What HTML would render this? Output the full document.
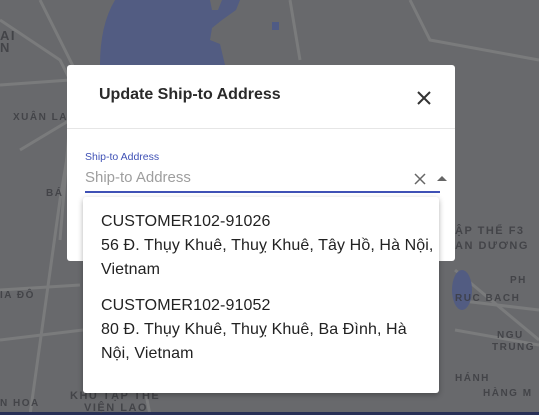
<!DOCTYPE html>
<html><head><meta charset="utf-8"><style>
*{margin:0;padding:0;box-sizing:border-box}
body{width:539px;height:415px;overflow:hidden;position:relative;background:#68696c;font-family:"Liberation Sans","DejaVu Sans",sans-serif}
.map{position:absolute;left:0;top:0}
.lbl{position:absolute;color:#3a3b40;font-size:10px;letter-spacing:1.5px;font-weight:bold;opacity:.8}
.dlg{position:absolute;left:67px;top:65px;width:388px;height:196px;background:#fff;border-radius:3px}
.title{position:absolute;left:32px;top:21px;font-size:16px;font-weight:bold;color:#2a2a2a}
.close{position:absolute;left:349px;top:25px}
.hr{position:absolute;left:0;top:63px;width:388px;height:1px;background:#e6e6e6}
.flabel{position:absolute;left:85px;top:151px;font-size:10.5px;color:#3f51b5}
.ph{position:absolute;left:85px;top:169px;font-size:15px;color:#9e9e9e}
.ul{position:absolute;left:85px;top:191px;width:355px;height:2px;background:#3f51b5}
.panel{position:absolute;left:83px;top:197px;width:356px;height:196px;background:#fff;border-radius:3px;box-shadow:0 2px 6px rgba(0,0,0,.3)}
.opt{position:absolute;left:18px;font-size:16px;line-height:24px;color:#222;letter-spacing:0.1px}
</style></head><body>
<svg class="map" width="539" height="415">
<g stroke="#7a7b7c" stroke-width="3" fill="none">
<path d="M0 20 L60 60 L100 140 L120 260 L150 415"/>
<path d="M40 0 L80 80 L60 200 L30 415"/>
<path d="M0 85 L70 80"/>
<path d="M0 290 L80 285"/>
<path d="M290 0 L300 60"/>
<path d="M410 0 L430 40 L539 60"/>
<path d="M455 270 L539 340"/>
<path d="M455 330 L539 345"/>
<path d="M455 300 L539 310"/>
<path d="M0 340 L83 330"/>
<path d="M20 150 L70 120 L60 240"/>
</g>
<path d="M115 0 L210 0 L212 10 L218 10 L222 0 L240 0 L236 10 L222 20 L212 28 L210 40 L220 44 L225 65 L100 65 Q100 25 115 0Z" fill="#525c82"/>
<ellipse cx="462" cy="290" rx="10" ry="20" fill="#525c82"/>
<rect x="272" y="22" width="7" height="8" fill="#4f5b85"/>
<rect x="0" y="412" width="539" height="3" fill="#283056"/>
</svg>
<div class="lbl" style="left:13px;top:112px">XUÂN LA</div>
<div class="lbl" style="left:46px;top:188px">BÁ</div>
<div class="lbl" style="left:0;top:290px">IA ĐÔ</div>
<div class="lbl" style="left:0;top:398px">N HOA</div>
<div class="lbl" style="left:70px;top:390px;font-size:11px">KHU TẬP THỂ</div>
<div class="lbl" style="left:84px;top:402px;font-size:11px">VIỆN LAO</div>
<div class="lbl" style="left:455px;top:225px;font-size:11px">ẬP THỂ F3</div>
<div class="lbl" style="left:455px;top:240px;font-size:11px">AN DƯƠNG</div>
<div class="lbl" style="left:455px;top:293px">RUC BACH</div>
<div class="lbl" style="left:510px;top:275px">PH</div>
<div class="lbl" style="left:497px;top:330px">NGU</div>
<div class="lbl" style="left:492px;top:342px">TRUNG</div>
<div class="lbl" style="left:455px;top:373px">HÁNH</div>
<div class="lbl" style="left:483px;top:388px">HÀNG M</div>
<div class="lbl" style="left:0;top:28px;font-size:13px">AI</div>
<div class="lbl" style="left:0;top:40px;font-size:13px">N</div>
<div class="dlg">
<div class="title">Update Ship-to Address</div>
<svg class="close" width="16" height="16" viewBox="0 0 16 16"><path d="M2 2L14 14M14 2L2 14" stroke="#333" stroke-width="2"/></svg>
<div class="hr"></div>
</div>
<div class="flabel">Ship-to Address</div>
<div class="ph">Ship-to Address</div>
<svg style="position:absolute;left:414px;top:173px" width="12" height="12"><path d="M1 1L11 11M11 1L1 11" stroke="#666" stroke-width="1.5"/></svg>
<svg style="position:absolute;left:437px;top:176px" width="10" height="6"><path d="M0 5L5 0L10 5Z" fill="#666"/></svg>
<div class="ul"></div>
<div class="panel">
<div class="opt" style="top:13px">CUSTOMER102-91026<br>56 Đ. Thụy Khuê, Thuỵ Khuê, Tây Hồ, Hà Nội,<br>Vietnam</div>
<div class="opt" style="top:97px">CUSTOMER102-91052<br>80 Đ. Thụy Khuê, Thuỵ Khuê, Ba Đình, Hà<br>Nội, Vietnam</div>
</div>
</body></html>
